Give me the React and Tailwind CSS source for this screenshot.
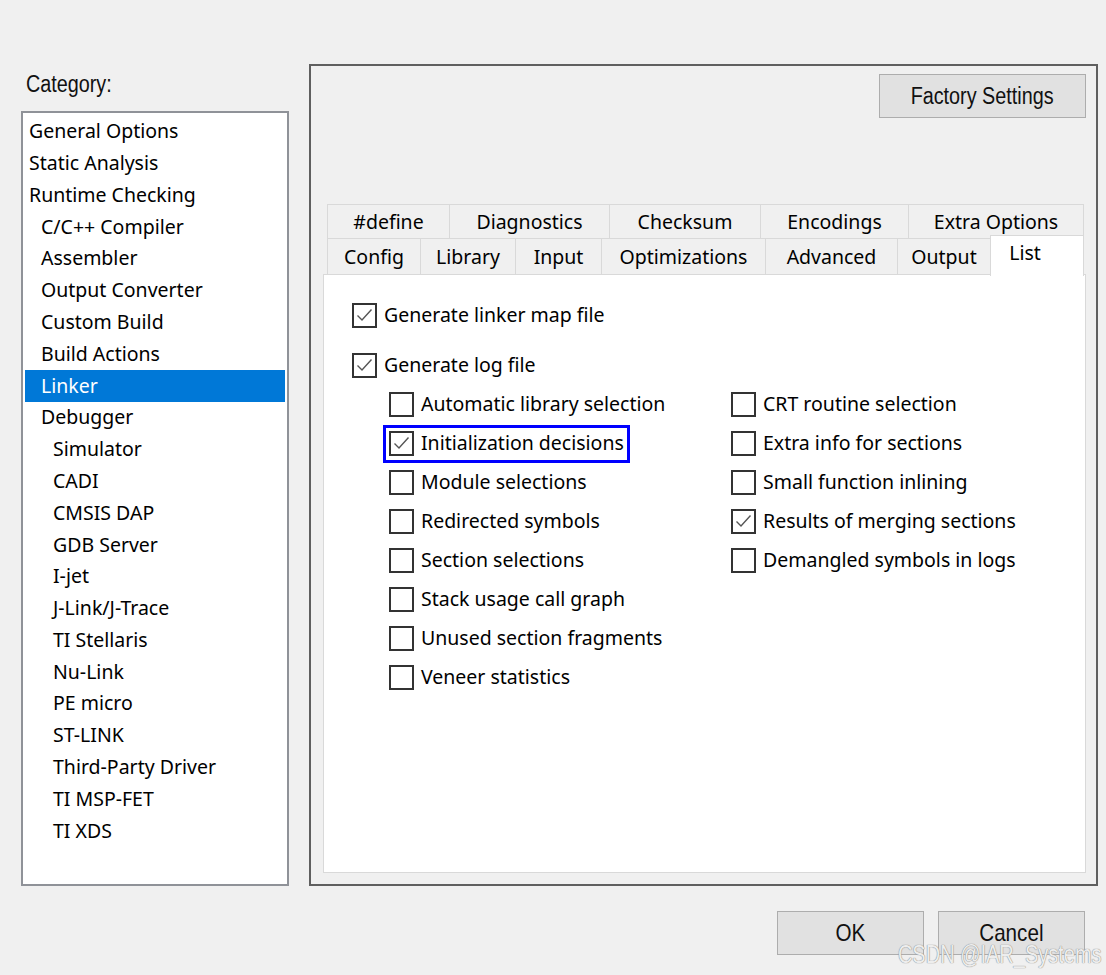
import React from "react";

const UI = { fontFamily: '"Noto Sans", "Open Sans", sans-serif' };
const NARROW = { fontFamily: '"Liberation Sans", Arial, sans-serif' };

const categories = [
  ["General Options", 0],
  ["Static Analysis", 0],
  ["Runtime Checking", 0],
  ["C/C++ Compiler", 1],
  ["Assembler", 1],
  ["Output Converter", 1],
  ["Custom Build", 1],
  ["Build Actions", 1],
  ["Linker", 1, true],
  ["Debugger", 1],
  ["Simulator", 2],
  ["CADI", 2],
  ["CMSIS DAP", 2],
  ["GDB Server", 2],
  ["I-jet", 2],
  ["J-Link/J-Trace", 2],
  ["TI Stellaris", 2],
  ["Nu-Link", 2],
  ["PE micro", 2],
  ["ST-LINK", 2],
  ["Third-Party Driver", 2],
  ["TI MSP-FET", 2],
  ["TI XDS", 2],
];

const row1 = [
  ["#define", 122],
  ["Diagnostics", 160],
  ["Checksum", 151],
  ["Encodings", 148],
  ["Extra Options", 176],
];
const row2 = [
  ["Config", 93],
  ["Library", 95],
  ["Input", 86],
  ["Optimizations", 164],
  ["Advanced", 132],
  ["Output", 93],
];

function Box({ checked }) {
  return (
    <span className="w-[25px] h-[25px] shrink-0 border-2 border-[#333333] bg-white flex items-center justify-center">
      {checked && (
        <svg width="21" height="21" viewBox="0 0 21 21">
          <polyline points="3.5,10.5 8,15 17.5,4.5" fill="none" stroke="#555555" strokeWidth="1.4" />
        </svg>
      )}
    </span>
  );
}

function Check({ label, checked, highlight }) {
  return (
    <div className="relative h-[39px] flex items-center gap-[7px] text-[19.5px] text-black whitespace-nowrap">
      {highlight && (
        <span className="absolute left-[-6px] top-[1px] w-[247px] h-[38px] border-[3px] border-[#0000ff]" />
      )}
      <Box checked={checked} />
      <span className="leading-none pb-[2px]">{label}</span>
    </div>
  );
}

function Narrow({ children, left }) {
  return (
    <span
      className={"inline-block whitespace-nowrap scale-x-[0.86] " + (left ? "origin-left" : "origin-center")}
      style={NARROW}
    >
      {children}
    </span>
  );
}

export default function App() {
  return (
    <div className="relative w-[1106px] h-[975px] bg-[#f0f0f0] overflow-hidden" style={UI}>
      <div className="flex pt-[64px] pl-[21px] gap-[20px]">
        {/* Left column */}
        <div className="w-[268px] flex flex-col">
          <div className="h-[47px] pt-[6px] pl-[5px] text-[23px] text-[#111] leading-[26px]">
            <Narrow left>Category:</Narrow>
          </div>
          <div className="h-[775px] border-2 border-[#8f9298] bg-white pt-[3px] px-[2px]">
            {categories.map(([name, lvl, sel]) => (
              <div
                key={name}
                className={
                  "h-[31.8px] flex items-center text-[19.5px] whitespace-nowrap " +
                  (sel ? "bg-[#0078d7] text-white" : "text-black")
                }
              >
                <span
                  className={
                    "leading-none pb-[2px] " +
                    (lvl === 0 ? "pl-[4px]" : lvl === 1 ? "pl-[16px]" : "pl-[28px]")
                  }
                >
                  {name}
                </span>
              </div>
            ))}
          </div>
        </div>

        {/* Right panel */}
        <div className="w-[789px] h-[822px] border-2 border-[#5f5f5f] flex flex-col pl-[12px] pr-[10px]">
          <div className="flex justify-end pt-[8px]">
            <button className="w-[207px] h-[44px] bg-[#e1e1e1] border border-[#adadad] text-[23px] text-[#111] flex items-center justify-center">
              <Narrow>Factory Settings</Narrow>
            </button>
          </div>

          {/* Tab control */}
          <div className="mt-[86px] flex flex-col w-[763px]">
            <div className="flex pl-[4px]">
              {row1.map(([t, w]) => (
                <div
                  key={t}
                  className="h-[34px] border-t border-l border-[#d9d9d9] last:border-r flex items-center justify-center text-[19.5px] text-black"
                  style={{ width: w }}
                >
                  <span className="leading-none">{t}</span>
                </div>
              ))}
            </div>
            <div className="flex pl-[4px] h-[36px] relative z-10">
              {row2.map(([t, w]) => (
                <div
                  key={t}
                  className="h-[36px] border-t border-l border-[#d9d9d9] flex items-center justify-center text-[19.5px] text-black"
                  style={{ width: w }}
                >
                  <span className="leading-none">{t}</span>
                </div>
              ))}
              <div className="w-[94px] h-[41px] -mt-[3px] bg-white border-t border-l border-r border-[#d9d9d9] flex justify-center pt-[7px] pr-[24px] text-[19.5px] text-black">
                <span className="leading-none">List</span>
              </div>
            </div>
            <div className="h-[599px] bg-white border border-[#d9d9d9] pl-[28px] pt-[21px]">
              <Check label="Generate linker map file" checked />
              <div className="mt-[11px]">
                <Check label="Generate log file" checked />
              </div>
              <div className="flex pl-[37px]">
                <div className="w-[342px] flex flex-col">
                  <Check label="Automatic library selection" />
                  <Check label="Initialization decisions" checked highlight />
                  <Check label="Module selections" />
                  <Check label="Redirected symbols" />
                  <Check label="Section selections" />
                  <Check label="Stack usage call graph" />
                  <Check label="Unused section fragments" />
                  <Check label="Veneer statistics" />
                </div>
                <div className="flex flex-col">
                  <Check label="CRT routine selection" />
                  <Check label="Extra info for sections" />
                  <Check label="Small function inlining" />
                  <Check label="Results of merging sections" checked />
                  <Check label="Demangled symbols in logs" />
                </div>
              </div>
            </div>
          </div>
        </div>
      </div>

      {/* Bottom buttons */}
      <div className="flex justify-end gap-[14px] pr-[21px] mt-[25px]">
        <button className="w-[147px] h-[44px] bg-[#e1e1e1] border border-[#adadad] text-[24px] text-[#111] flex items-center justify-center">
          <Narrow>OK</Narrow>
        </button>
        <button className="w-[147px] h-[44px] bg-[#e1e1e1] border border-[#adadad] text-[24px] text-[#111] flex items-center justify-center">
          <Narrow>Cancel</Narrow>
        </button>
      </div>

      {/* Watermark */}
      <div
        className="absolute right-[4px] top-[941px] text-[25px] leading-none text-[#ededed]"
        style={{ textShadow: "0 0 1px #8a8a8a, 0 0 1px #8a8a8a" }}
      >
        <span className="inline-block whitespace-nowrap scale-x-[0.8] origin-right" style={NARROW}>
          CSDN @IAR_Systems
        </span>
      </div>
    </div>
  );
}
